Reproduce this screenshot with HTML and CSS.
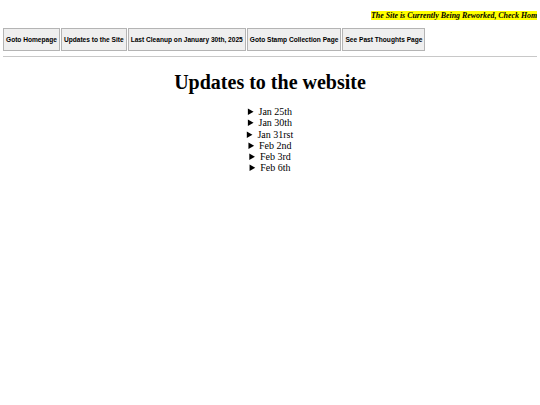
FILE: index.html
```html
<!DOCTYPE html>
<html>
<head>
<meta charset="utf-8">
<link rel="stylesheet" href="styles.css">
</head>
<body>
<div class="banner"><span class="notice">The Site is Currently Being Reworked, Check Home Page for Updates</span></div>
<nav class="nav">
  <button class="btn">Goto Homepage</button><button class="btn">Updates to the Site</button><button class="btn">Last Cleanup on January 30th, 2025</button><button class="btn">Goto Stamp Collection Page</button><button class="btn">See Past Thoughts Page</button>
</nav>
<hr class="rule">
<h1 class="title">Updates to the website</h1>
<div class="updates">
  <details class="item"><summary>Jan 25th</summary></details>
  <details class="item"><summary>Jan 30th</summary></details>
  <details class="item"><summary>Jan 31rst</summary></details>
  <details class="item"><summary>Feb 2nd</summary></details>
  <details class="item"><summary>Feb 3rd</summary></details>
  <details class="item"><summary>Feb 6th</summary></details>
</div>
</body>
</html>
```
FILE: styles.css
```css
html, body {
  margin: 0;
  padding: 0;
  background: #ffffff;
  color: #000000;
  font-family: "Liberation Serif", "Times New Roman", serif;
}
body {
  padding: 0 3px;
}
.banner {
  white-space: nowrap;
  overflow: hidden;
  padding-top: 11px;
  padding-left: 368px;
  font-size: 7.9px;
  line-height: 10px;
  height: 10px;
}
.notice {
  background: #ffff00;
  font-weight: bold;
  font-style: italic;
}
.nav {
  display: flex;
  gap: 1px;
  margin-top: 7px;
}
.btn {
  font-family: "Liberation Sans", Arial, sans-serif;
  font-weight: bold;
  font-size: 6.6px;
  height: 23px;
  padding: 0 2px;
  margin: 0;
  background: #efefef;
  border: 1px solid #b4b4b4;
  color: #000;
}
.rule {
  margin: 5px 0 0 0;
  border: 0;
  border-top: 1px solid #c8c8c8;
  height: 0;
}
.title {
  text-align: center;
  font-size: 20px;
  margin: 14px 0 12px 0;
  line-height: 23px;
}
.updates {
  text-align: center;
  font-size: 10px;
  line-height: 11.3px;
}
.item summary {
  cursor: pointer;
}
```
